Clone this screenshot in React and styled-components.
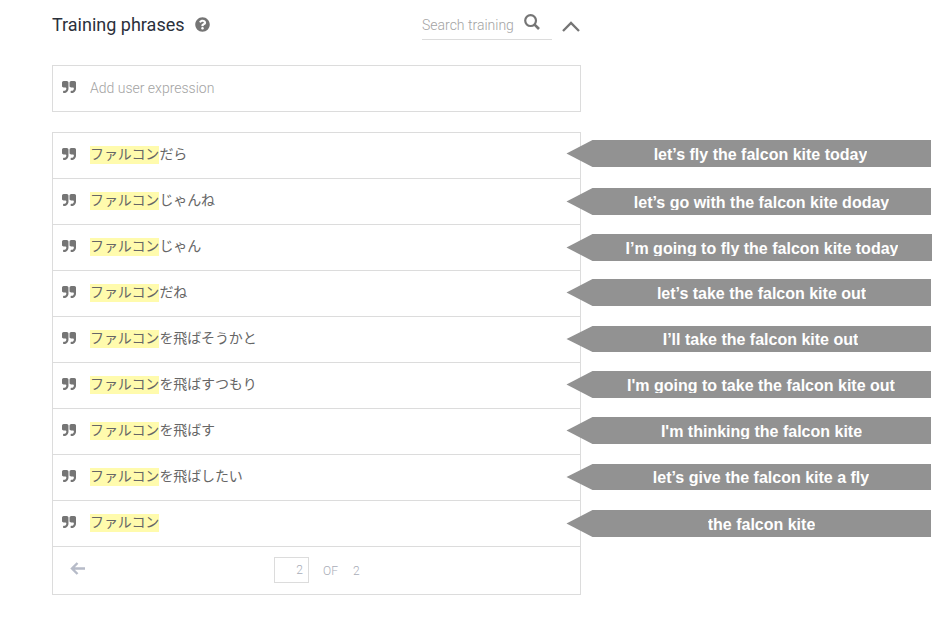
import React from 'react';
import styled, { createGlobalStyle } from 'styled-components';
import { FaQuestionCircle } from 'react-icons/fa';

const GlobalStyle = createGlobalStyle`
  * { box-sizing: border-box; }
  body { margin: 0; background: #fff; overflow: hidden; }
`;

const Page = styled.main`
  width: 933px;
  height: 620px;
  padding-left: 52px;
  overflow: hidden;
  background: #fff;
  color: #2b303b;
  font-family: Roboto, 'Noto Sans CJK JP', sans-serif;
`;

const Header = styled.header`
  display: flex;
  width: 528px;
  height: 65px;
`;

const Title = styled.h1`
  margin: 14px 0 0;
  width: 143px;
  font-size: 18px;
  font-weight: 400;
  line-height: 22px;
  white-space: nowrap;
`;

const HelpIcon = styled(FaQuestionCircle)`
  width: 15px;
  height: 15px;
  margin-top: 17px;
  color: #757575;
`;

const SearchField = styled.label`
  display: flex;
  justify-content: space-between;
  width: 130px;
  height: 40px;
  margin-left: auto;
  padding-right: 12px;
  border-bottom: 1px solid #dcdcdc;
`;

const SearchText = styled.span`
  padding-top: 15px;
  color: #a3a3a3;
  font-size: 14px;
  font-weight: 300;
  line-height: 20px;
  white-space: nowrap;
`;

const SearchIcon = styled.svg`
  width: 16px;
  height: 16px;
  margin-top: 14px;
`;

const Chevron = styled.svg`
  width: 18px;
  height: 11px;
  margin: 21px 0 0 10px;
`;

const AddBox = styled.div`
  display: flex;
  align-items: center;
  width: 529px;
  height: 47px;
  padding: 0 0 1px 9px;
  border: 1px solid #dcdcdc;
`;

const Placeholder = styled.span`
  margin-left: 14px;
  color: #a3a3a3;
  font-size: 14px;
  font-weight: 300;
`;

const QuoteSvg = styled.svg`
  flex: none;
  width: 14px;
  height: 12px;
  margin-top: -2px;
  color: #757575;
`;

const Panel = styled.section`
  width: 529px;
  height: 463px;
  margin-top: 20px;
  border: 1px solid #dcdcdc;
`;

const Row = styled.div`
  position: relative;
  display: flex;
  align-items: center;
  height: 46px;
  padding: 0 0 1px 9px;
  border-bottom: 1px solid #dcdcdc;
`;

const Phrase = styled.span`
  display: flex;
  height: 18px;
  margin-left: 14px;
  color: #666;
  font-family: 'Noto Sans CJK JP', sans-serif;
  font-size: 14px;
  font-weight: 400;
  line-height: 14px;
  letter-spacing: -0.11px;
  white-space: nowrap;
`;

const Entity = styled.mark`
  width: 69.4px;
  height: 18px;
  background: #fffbad;
  color: inherit;
`;

const Callout = styled.div`
  position: absolute;
  top: ${(p) => p.$top}px;
  left: 513px;
  display: flex;
  justify-content: center;
  width: ${(p) => p.$width}px;
  height: ${(p) => p.$height}px;
  padding-left: ${(p) => p.$inset}px;
  background: #929292;
  clip-path: polygon(0.5px 50%, 26.5px 0, 100% 0, 100% 100%, 26.5px 100%);
`;

const CalloutText = styled.span`
  height: ${(p) => p.$clip}px;
  padding-top: ${(p) => p.$pad}px;
  overflow: hidden;
  color: #fff;
  font-family: 'Liberation Sans', Arial, sans-serif;
  font-size: 16px;
  font-weight: 700;
  line-height: 20px;
  white-space: nowrap;
`;

const Pager = styled.footer`
  display: flex;
  height: 47px;
  padding: 10px 0 0 17px;
  color: #a9adb8;
  font-size: 12px;
  font-weight: 300;
`;

const BackIcon = styled.svg`
  width: 16px;
  height: 14px;
  margin-top: 5px;
`;

const PageNumber = styled.div`
  width: 35px;
  height: 26px;
  margin-left: 188px;
  padding-right: 5px;
  border: 1px solid #dcdcdc;
  line-height: 25px;
  text-align: right;
`;

const PageTotal = styled.span`
  display: flex;
  gap: 15px;
  margin-left: 14px;
  line-height: 28px;
`;

const phrases = [
  { rest: 'だら', note: 'let’s fly the falcon kite today', top: 7, inset: 24, clip: 23 },
  { rest: 'じゃんね', note: 'let’s go with the falcon kite doday', top: 9, inset: 26, clip: 22 },
  { rest: 'じゃん', note: 'I’m going to fly the falcon kite today', top: 9, width: 366, inset: 26, clip: 22 },
  { rest: 'だね', note: 'let’s take the falcon kite out', top: 8, inset: 26, clip: 23 },
  { rest: 'を飛ばそうかと', note: 'I’ll take the falcon kite out', top: 9, height: 26, pad: 4, inset: 24, clip: 22 },
  { rest: 'を飛ばすつもり', note: "I'm going to take the falcon kite out", top: 8, inset: 25, clip: 22 },
  { rest: 'を飛ばす', note: "I'm thinking the falcon kite", top: 8, inset: 26, clip: 22 },
  { rest: 'を飛ばしたい', note: 'let’s give the falcon kite a fly', top: 9, height: 26, pad: 4, inset: 25, clip: 22 },
  { rest: '', note: 'the falcon kite', top: 9, inset: 26, clip: 23 },
];

const quoteMark =
  'M768 320v704q0 104-40.5 198.5t-109.5 163.5-163.5 109.5-198.5 40.5h-64q-26 0-45-19t-19-45v-128q0-26 19-45t45-19h64q106 0 181-75t75-181v-32q0-40-28-68t-68-28h-224q-80 0-136-56t-56-136v-384q0-80 56-136t136-56h384q80 0 136 56t56 136z';

function QuoteIcon() {
  return (
    <QuoteSvg viewBox="0 128 1664 1408" fill="currentColor" preserveAspectRatio="none">
      <path d={quoteMark} />
      <path d={quoteMark} transform="translate(896 0)" />
    </QuoteSvg>
  );
}

export default function App() {
  return (
    <Page>
      <GlobalStyle />
      <Header>
        <Title>Training phrases</Title>
        <HelpIcon />
        <SearchField>
          <SearchText>Search training</SearchText>
          <SearchIcon viewBox="0 0 16 16" fill="none" stroke="#757575">
            <circle cx="6.6" cy="6.6" r="5.4" strokeWidth="2.2" />
            <path d="M10.6 10.6 15 15" strokeWidth="2.7" />
          </SearchIcon>
        </SearchField>
        <Chevron viewBox="0 0 18 11" fill="none" stroke="#757575" strokeWidth="2.3">
          <path d="M1 10 9 2 17 10" />
        </Chevron>
      </Header>
      <AddBox>
        <QuoteIcon />
        <Placeholder>Add user expression</Placeholder>
      </AddBox>
      <Panel>
        {phrases.map((p) => (
          <Row key={p.note}>
            <QuoteIcon />
            <Phrase>
              <Entity>ファルコン</Entity>
              {p.rest}
            </Phrase>
            <Callout $top={p.top} $height={p.height ?? 27} $width={p.width ?? 365} $inset={p.inset}>
              <CalloutText $pad={p.pad ?? 5} $clip={p.clip}>{p.note}</CalloutText>
            </Callout>
          </Row>
        ))}
        <Pager>
          <BackIcon viewBox="0 0 16 14" fill="none" stroke="#b6bbc8" strokeWidth="2.4">
            <path d="M15 6.5H2.5M7.5 1 2 6.5 7.5 12" />
          </BackIcon>
          <PageNumber>2</PageNumber>
          <PageTotal>
            <span>OF</span>
            <span>2</span>
          </PageTotal>
        </Pager>
      </Panel>
    </Page>
  );
}
